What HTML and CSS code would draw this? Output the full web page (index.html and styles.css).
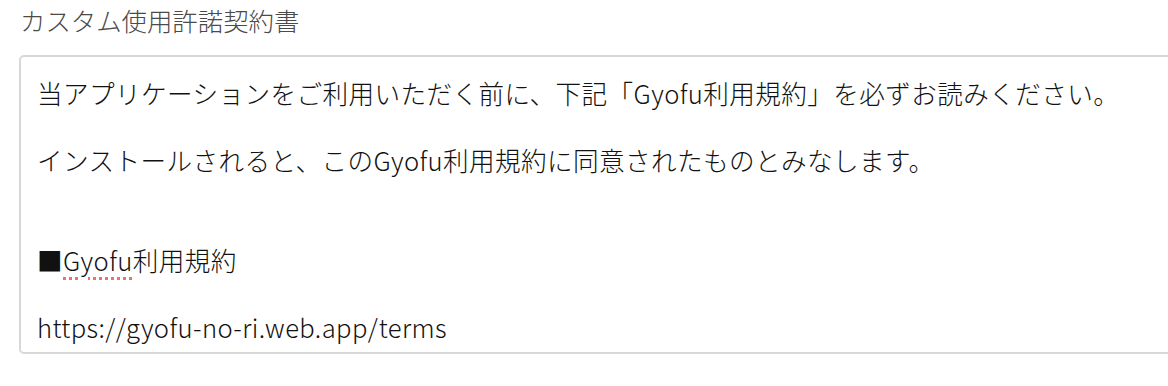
FILE: index.html
```html
<!DOCTYPE html>
<html lang="ja">
<head>
<meta charset="utf-8">
<link rel="stylesheet" href="styles.css">
</head>
<body>
<div class="field">
  <div class="label">カスタム使用許諾契約書</div>
  <div class="box"><div class="text">当アプリケーションをご利用いただく前に、下記「Gyofu利用規約」を必ずお読みください。

インストールされると、このGyofu利用規約に同意されたものとみなします。


■<span class="spell">Gyofu</span>利用規約

https://gyofu-no-ri.web.app/terms</div></div>
</div>
</body>
</html>
```
FILE: styles.css
```css
html, body {
  margin: 0;
  padding: 0;
  background: #ffffff;
  overflow: hidden;
}
body {
  font-family: "Noto Sans CJK JP", "Noto Sans", sans-serif;
  width: 1168px;
  height: 386px;
}
.field {
  padding: 4px 0 0 20px;
}
.label {
  font-size: 25.4px;
  font-weight: 300;
  line-height: 33px;
  color: #4a4a4a;
  height: 51px;
}
.box {
  width: 1200px;
  height: 299px;
  margin-left: -1px;
  border: 2px solid #d8d8d8;
  border-radius: 5px;
  box-sizing: border-box;
  padding: 19px 16px 0 16px;
}
.text {
  white-space: pre-wrap;
  font-size: 25.6px;
  font-weight: 300;
  letter-spacing: 0.4px;
  line-height: 33.4px;
  color: #111111;
}
.spell {
  text-decoration: underline dotted #ef6f6f;
  text-decoration-thickness: 3px;
  text-underline-offset: 6px;
}
```
